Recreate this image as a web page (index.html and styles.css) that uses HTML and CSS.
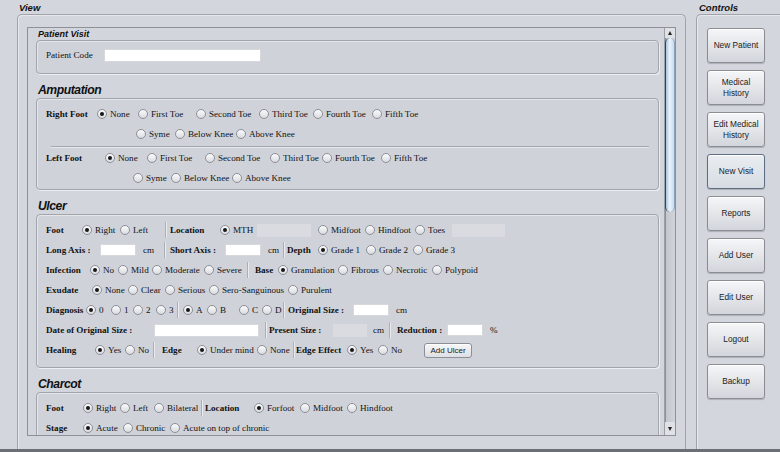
FILE: index.html
```html
<!DOCTYPE html>
<html>
<head>
<meta charset="utf-8">
<title>Patient Visit</title>
<link rel="stylesheet" href="styles.css">
</head>
<body>
<div class="app">
  <section class="view-wrap">
    <div class="caption">View</div>
    <div class="view-panel">
      <div class="scrollpane">
        <div class="content">
          <div class="sub-title">Patient Visit</div>
          <div class="box box-patient">
            <div class="row r-patient"><span>Patient Code</span><input class="in in-code" type="text"></div>
          </div>

          <div class="sec-title">Amputation</div>
          <div class="box box-amp">
            <div class="row r-amp-r1">
              <b>Right Foot</b>
              <label class="opt"><i class="rb on"></i>None</label>
              <label class="opt"><i class="rb"></i>First Toe</label>
              <label class="opt"><i class="rb"></i>Second Toe</label>
              <label class="opt"><i class="rb"></i>Third Toe</label>
              <label class="opt"><i class="rb"></i>Fourth Toe</label>
              <label class="opt"><i class="rb"></i>Fifth Toe</label>
            </div>
            <div class="row r-amp-r2">
              <label class="opt"><i class="rb"></i>Syme</label>
              <label class="opt"><i class="rb"></i>Below Knee</label>
              <label class="opt"><i class="rb"></i>Above Knee</label>
            </div>
            <div class="divider"></div>
            <div class="row r-amp-l1">
              <b>Left Foot</b>
              <label class="opt"><i class="rb on"></i>None</label>
              <label class="opt"><i class="rb"></i>First Toe</label>
              <label class="opt"><i class="rb"></i>Second Toe</label>
              <label class="opt"><i class="rb"></i>Third Toe</label>
              <label class="opt"><i class="rb"></i>Fourth Toe</label>
              <label class="opt"><i class="rb"></i>Fifth Toe</label>
            </div>
            <div class="row r-amp-l2">
              <label class="opt"><i class="rb"></i>Syme</label>
              <label class="opt"><i class="rb"></i>Below Knee</label>
              <label class="opt"><i class="rb"></i>Above Knee</label>
            </div>
          </div>

          <div class="sec-title">Ulcer</div>
          <div class="box box-ulcer">
            <div class="row r-u1">
              <b>Foot</b>
              <label class="opt"><i class="rb on"></i>Right</label>
              <label class="opt"><i class="rb"></i>Left</label>
              <span class="sep"></span>
              <b>Location</b>
              <label class="opt"><i class="rb on"></i>MTH</label>
              <input class="in in-mth" type="text" disabled>
              <label class="opt"><i class="rb"></i>Midfoot</label>
              <label class="opt"><i class="rb"></i>Hindfoot</label>
              <label class="opt"><i class="rb"></i>Toes</label>
              <input class="in in-toes" type="text" disabled>
            </div>
            <div class="row r-u2">
              <b>Long Axis :</b>
              <input class="in in-sm" type="text">
              <span>cm</span>
              <span class="sep"></span>
              <b>Short Axis :</b>
              <input class="in in-sm" type="text">
              <span>cm</span>
              <span class="sep"></span>
              <b>Depth</b>
              <label class="opt"><i class="rb on"></i>Grade 1</label>
              <label class="opt"><i class="rb"></i>Grade 2</label>
              <label class="opt"><i class="rb"></i>Grade 3</label>
            </div>
            <div class="row r-u3">
              <b>Infection</b>
              <label class="opt"><i class="rb on"></i>No</label>
              <label class="opt"><i class="rb"></i>Mild</label>
              <label class="opt"><i class="rb"></i>Moderate</label>
              <label class="opt"><i class="rb"></i>Severe</label>
              <span class="sep"></span>
              <b>Base</b>
              <label class="opt"><i class="rb on"></i>Granulation</label>
              <label class="opt"><i class="rb"></i>Fibrous</label>
              <label class="opt"><i class="rb"></i>Necrotic</label>
              <label class="opt"><i class="rb"></i>Polypoid</label>
            </div>
            <div class="row r-u4">
              <b>Exudate</b>
              <label class="opt"><i class="rb on"></i>None</label>
              <label class="opt"><i class="rb"></i>Clear</label>
              <label class="opt"><i class="rb"></i>Serious</label>
              <label class="opt"><i class="rb"></i>Sero-Sanguinous</label>
              <label class="opt"><i class="rb"></i>Purulent</label>
            </div>
            <div class="row r-u5">
              <b>Diagnosis</b>
              <label class="opt"><i class="rb on"></i>0</label>
              <label class="opt"><i class="rb"></i>1</label>
              <label class="opt"><i class="rb"></i>2</label>
              <label class="opt"><i class="rb"></i>3</label>
              <span class="sep"></span>
              <label class="opt"><i class="rb on"></i>A</label>
              <label class="opt"><i class="rb"></i>B</label>
              <label class="opt"><i class="rb"></i>C</label>
              <label class="opt"><i class="rb"></i>D</label>
              <span class="sep"></span>
              <b>Original Size :</b>
              <input class="in in-sm" type="text">
              <span>cm</span>
            </div>
            <div class="row r-u6">
              <b>Date of Original Size :</b>
              <input class="in in-date" type="text">
              <span class="sep"></span>
              <b>Present Size :</b>
              <input class="in in-pres" type="text" disabled>
              <span>cm</span>
              <span class="sep"></span>
              <b>Reduction :</b>
              <input class="in in-sm" type="text">
              <span>%</span>
            </div>
            <div class="row r-u7">
              <b>Healing</b>
              <label class="opt"><i class="rb on"></i>Yes</label>
              <label class="opt"><i class="rb"></i>No</label>
              <span class="sep"></span>
              <b>Edge</b>
              <label class="opt"><i class="rb on"></i>Under mind</label>
              <label class="opt"><i class="rb"></i>None</label>
              <span class="sep"></span>
              <b>Edge Effect</b>
              <label class="opt"><i class="rb on"></i>Yes</label>
              <label class="opt"><i class="rb"></i>No</label>
              <button class="small-btn" type="button">Add Ulcer</button>
            </div>
          </div>

          <div class="sec-title">Charcot</div>
          <div class="box box-charcot">
            <div class="row r-c1">
              <b>Foot</b>
              <label class="opt"><i class="rb on"></i>Right</label>
              <label class="opt"><i class="rb"></i>Left</label>
              <label class="opt"><i class="rb"></i>Bilateral</label>
              <span class="sep"></span>
              <b>Location</b>
              <label class="opt"><i class="rb on"></i>Forfoot</label>
              <label class="opt"><i class="rb"></i>Midfoot</label>
              <label class="opt"><i class="rb"></i>Hindfoot</label>
            </div>
            <div class="row r-c2">
              <b>Stage</b>
              <label class="opt"><i class="rb on"></i>Acute</label>
              <label class="opt"><i class="rb"></i>Chronic</label>
              <label class="opt"><i class="rb"></i>Acute on top of chronic</label>
            </div>
          </div>
        </div>
        <div class="scrollbar">
          <div class="sb-btn"><span class="tri-up"></span></div>
          <div class="sb-track"><div class="sb-thumb"></div></div>
          <div class="sb-btn sb-btn-down"><span class="tri-down"></span></div>
        </div>
      </div>
    </div>
  </section>

  <section class="controls-wrap">
    <div class="caption">Controls</div>
    <div class="controls-panel">
      <button class="btn" type="button">New Patient</button>
      <button class="btn" type="button">Medical<br>History</button>
      <button class="btn" type="button">Edit Medical<br>History</button>
      <button class="btn btn-focus" type="button">New Visit</button>
      <button class="btn" type="button">Reports</button>
      <button class="btn" type="button">Add User</button>
      <button class="btn" type="button">Edit User</button>
      <button class="btn" type="button">Logout</button>
      <button class="btn" type="button">Backup</button>
    </div>
  </section>
</div>
<div class="taskbar"></div>
</body>
</html>
```

FILE: styles.css
```css
* { box-sizing: border-box; }
html, body { margin: 0; padding: 0; }
body {
  width: 780px;
  height: 452px;
  overflow: hidden;
  background: #d3d6dc;
  font-family: "Liberation Serif", "Times New Roman", serif;
  font-size: 9.1px;
  color: #111;
}
.app {
  display: flex;
  height: 449px;
  padding-left: 17px;
}
.caption {
  font-family: "Liberation Sans", Arial, sans-serif;
  font-weight: bold;
  font-style: italic;
  font-size: 9.5px;
  height: 14px;
  line-height: 13px;
  padding: 1px 0 0 2px;
  color: #111;
}
.view-wrap {
  width: 669px;
  display: flex;
  flex-direction: column;
}
.view-panel {
  flex: 1;
  border: 1px solid #a1a4ab;
  border-bottom: none;
  border-radius: 5px 5px 0 0;
  padding: 12px 9px 0 9px;
  box-shadow: inset 1px 1px 0 #e6e8ec;
}
.scrollpane {
  display: flex;
  height: 409px;
  border: 1px solid #8e9198;
  background: #d2d5db;
}
.content {
  flex: 1;
  overflow: hidden;
  padding: 0 5px 0 8px;
}
.sub-title {
  font-family: "Liberation Sans", Arial, sans-serif;
  font-weight: bold;
  font-style: italic;
  font-size: 9px;
  height: 12px;
  line-height: 12px;
  padding-left: 2px;
}
.sec-title {
  font-family: "Liberation Sans", Arial, sans-serif;
  font-weight: bold;
  font-style: italic;
  font-size: 12.2px;
  letter-spacing: -0.45px;
  height: 16px;
  line-height: 16px;
  margin-top: 8px;
  padding-left: 2px;
}
.box {
  border: 1px solid #a2a5ac;
  border-radius: 4px;
  background: #cfd2d9;
  box-shadow: inset 1px 1px 0 rgba(255,255,255,0.45), 1px 1px 0 rgba(255,255,255,0.6);
  padding: 5px 0 1px 9px;
}
.box-patient { padding: 4px 0 8px 9px; }
.box-ulcer { padding-bottom: 7px; }
.box-charcot { padding-bottom: 0; height: 60px; }

.row {
  display: grid;
  height: 20px;
  align-items: center;
  white-space: nowrap;
}
.row b { font-weight: bold; }
.opt {
  display: flex;
  align-items: center;
}
.rb {
  flex: none;
  position: relative;
  width: 10px;
  height: 10px;
  border-radius: 50%;
  border: 1px solid #8d9097;
  background: linear-gradient(#fbfbfc, #d9dbe0);
  margin-right: 3px;
}
.rb.on::after {
  content: "";
  position: absolute;
  left: 2px;
  top: 2px;
  width: 4px;
  height: 4px;
  border-radius: 50%;
  background: #161616;
}
.sep {
  align-self: center;
  width: 1px;
  height: 16px;
  background: #abaeb4;
  box-shadow: 1px 0 0 #e9ebee;
}
.divider {
  height: 1px;
  margin: 3px 9px 1px 5px;
  background: #a3a6ac;
  box-shadow: 0 1px 0 #e6e8eb;
}
.in {
  display: block;
  height: 13px;
  padding: 0;
  margin: 0;
  border: 1px solid #d6d8dc;
  background: #fff;
  outline: none;
}
.in:disabled { background: #d9dbe0; border-color: #d9dbe0; }
.in-code { width: 157px; }
.in-sm { width: 36px; height: 12px; }
.in-mth { width: 54px; }
.in-toes { width: 53px; }
.in-date { width: 105px; }
.in-pres { width: 34px; }

.r-patient { grid-template-columns: 58px auto; }
.r-amp-r1 { grid-template-columns: 51px 41px 58px 63px 54px 59px auto; }
.r-amp-r2 { padding-left: 90px; height: 19px; grid-template-columns: 39px 61px auto; }
.r-amp-l1 { grid-template-columns: 59px 42px 58px 65px 52px 59px auto; }
.r-amp-l2 { padding-left: 87px; grid-template-columns: 38px 61px auto; }

.r-u1 { grid-template-columns: 36px 38px 45px 5px 50px 37px 61px 47px 50px 37px auto; }
.r-u2 { grid-template-columns: 54px 43px 21px 6px 55px 43px 15px 4px 31px 48px 47px auto; }
.r-u3 { grid-template-columns: 44px 28px 34px 52px 43px 8px 23px 60px 45px 49px auto; }
.r-u4 { grid-template-columns: 46px 36px 37px 44px 79px auto; }
.r-u5 { grid-template-columns: 40px 25px 22px 23px 21px 6px 24px 32px 23px 21px 5px 65px 43px auto; }
.r-u6 { grid-template-columns: 108px 111px 4px 64px 40px 16px 8px 50px 43px auto; }
.r-u7 { grid-template-columns: 49px 30px 28px 9px 35px 60px 36px 3px 51px 31px 46px auto; }

.r-c1 { grid-template-columns: 37px 37px 34px 47px 4px 49px 46px 47px auto; }
.r-c2 { grid-template-columns: 37px 40px 47px auto; }

.small-btn {
  width: 48px;
  height: 15px;
  padding: 0;
  border: 1px solid #8c8f96;
  border-radius: 3px;
  background: linear-gradient(#f6f7f8, #dcdfe4);
  box-shadow: inset 0 1px 0 #fff;
  font-family: "Liberation Sans", Arial, sans-serif;
  font-size: 8px;
  color: #222;
}

.scrollbar {
  width: 11px;
  display: flex;
  flex-direction: column;
  background: #c9ccd2;
  border-left: 1px solid #9c9fa5;
}
.sb-btn {
  height: 10px;
  display: flex;
  align-items: center;
  justify-content: center;
  background: #dfe1e5;
}
.sb-btn-down { height: 13px; }
.tri-up, .tri-down {
  width: 0;
  height: 0;
  border-left: 2px solid transparent;
  border-right: 2px solid transparent;
}
.tri-up { border-bottom: 4px solid #222; }
.tri-down { border-top: 4px solid #222; }
.sb-track {
  flex: 1;
  background: linear-gradient(to right, #8d9097 0, #8d9097 1px, #c4c7cd 1px, #d0d3d8 100%);
}
.sb-thumb {
  height: 174px;
  border-left: 1px solid #3c4047;
  border-right: 1px solid #8fa2b8;
  border-radius: 5px;
  background: linear-gradient(to right, #a9c3de, #e9f3fc 45%, #c6dbef);
}

.controls-wrap {
  margin-left: 10px;
  flex: 1;
  display: flex;
  flex-direction: column;
}
.controls-wrap .caption { padding-left: 3px; }
.controls-panel {
  flex: 1;
  border: 1px solid #a1a4ab;
  border-right: none;
  border-bottom: none;
  border-radius: 5px 0 0 0;
  box-shadow: inset 1px 1px 0 #e6e8ec;
  padding: 13px 0 0 10px;
  display: flex;
  flex-direction: column;
  gap: 7px;
}
.btn {
  width: 58px;
  height: 35px;
  padding: 0;
  border: 1px solid #8b8e95;
  border-radius: 3px;
  background: linear-gradient(#f5f6f8, #e2e4e8 55%, #d2d5db);
  box-shadow: inset 0 1px 0 #fff, 0 1px 1px rgba(0,0,0,0.18);
  font-family: "Liberation Sans", Arial, sans-serif;
  font-size: 8.3px;
  line-height: 11px;
  color: #222;
  text-align: center;
}
.btn-focus {
  border-color: #5d6d83;
  background: linear-gradient(#e9edf2, #d7dce3);
}
.taskbar {
  height: 3px;
  background: #6c6f75;
}
```
